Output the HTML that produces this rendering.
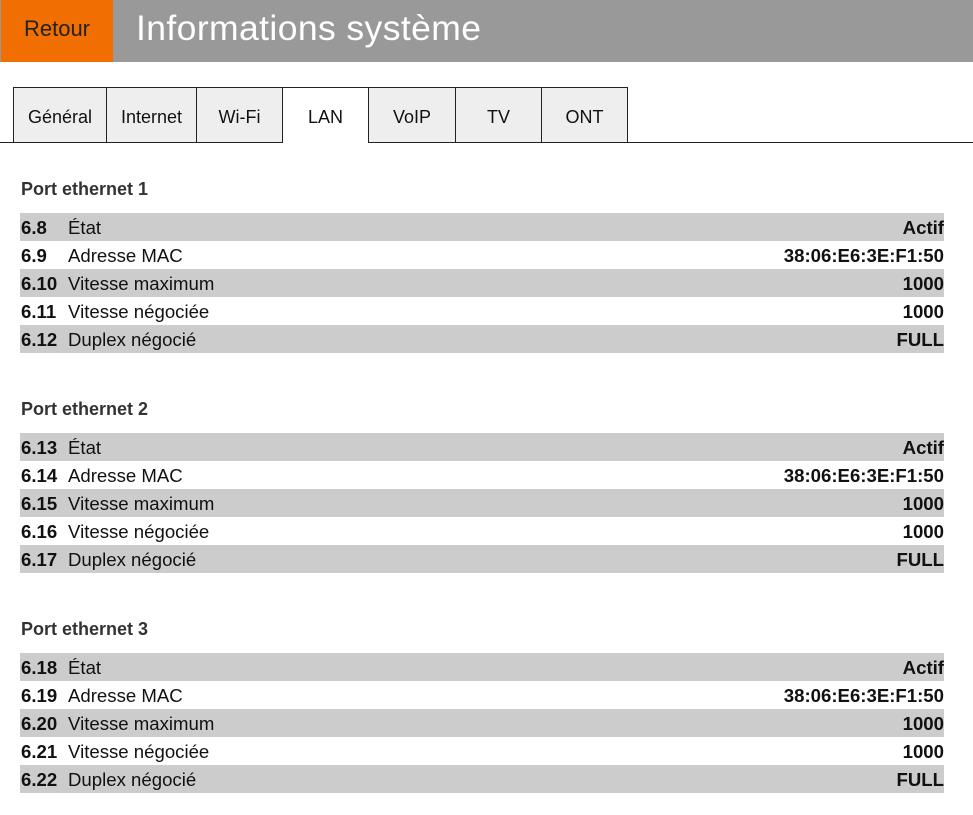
<!DOCTYPE html>
<html><head><meta charset="utf-8"><style>
body{margin:0;width:973px;height:815px;background:#fff;font-family:"Liberation Sans",Arial,sans-serif;overflow:hidden;position:relative}
.hdr{position:absolute;left:0;top:0;width:973px;height:62px;background:#999}
.ret{position:absolute;left:1px;top:0;width:112px;height:62px;background:#f16e00;color:#222;font-size:22px;line-height:58px;text-align:center}
.ttl{position:absolute;left:136px;top:0;line-height:56px;font-size:35.5px;color:#fff;letter-spacing:0.4px}
.line{position:absolute;left:0;top:142px;width:973px;height:1px;background:#222}
.tab{position:absolute;top:87px;height:55px;background:#eee;border-left:1px solid #222;border-top:1px solid #222;box-sizing:border-box;font-size:18px;color:#111;text-align:center;line-height:58px}
.tab.act{background:#fff;height:56px}
.tab.last{border-right:1px solid #222}
.sec{position:absolute;left:21px;font-size:18px;font-weight:bold;color:#333}
.row{position:absolute;left:20px;width:924px;height:28px;font-size:18.6px;line-height:29px;color:#111}
.row.g{background:#ccc}
.row b{position:absolute;left:1px}
.row span{position:absolute;left:48px}
.row i{position:absolute;right:0;font-style:normal;font-weight:bold}
</style></head><body>
<div class="hdr"></div><div class="ret">Retour</div><div class="ttl">Informations système</div>
<div class="line"></div>
<div class="tab" style="left:13px;width:93px">Général</div>
<div class="tab" style="left:106px;width:90px">Internet</div>
<div class="tab" style="left:196px;width:86px">Wi-Fi</div>
<div class="tab act" style="left:282px;width:86px">LAN</div>
<div class="tab" style="left:368px;width:87px">VoIP</div>
<div class="tab" style="left:455px;width:86px">TV</div>
<div class="tab last" style="left:541px;width:87px">ONT</div>

<div class="sec" style="top:179px">Port ethernet 1</div>
<div class="row g" style="top:213px"><b>6.8</b><span>État</span><i>Actif</i></div>
<div class="row" style="top:241px"><b>6.9</b><span>Adresse MAC</span><i>38:06:E6:3E:F1:50</i></div>
<div class="row g" style="top:269px"><b>6.10</b><span>Vitesse maximum</span><i>1000</i></div>
<div class="row" style="top:297px"><b>6.11</b><span>Vitesse négociée</span><i>1000</i></div>
<div class="row g" style="top:325px"><b>6.12</b><span>Duplex négocié</span><i>FULL</i></div>

<div class="sec" style="top:399px">Port ethernet 2</div>
<div class="row g" style="top:433px"><b>6.13</b><span>État</span><i>Actif</i></div>
<div class="row" style="top:461px"><b>6.14</b><span>Adresse MAC</span><i>38:06:E6:3E:F1:50</i></div>
<div class="row g" style="top:489px"><b>6.15</b><span>Vitesse maximum</span><i>1000</i></div>
<div class="row" style="top:517px"><b>6.16</b><span>Vitesse négociée</span><i>1000</i></div>
<div class="row g" style="top:545px"><b>6.17</b><span>Duplex négocié</span><i>FULL</i></div>

<div class="sec" style="top:619px">Port ethernet 3</div>
<div class="row g" style="top:653px"><b>6.18</b><span>État</span><i>Actif</i></div>
<div class="row" style="top:681px"><b>6.19</b><span>Adresse MAC</span><i>38:06:E6:3E:F1:50</i></div>
<div class="row g" style="top:709px"><b>6.20</b><span>Vitesse maximum</span><i>1000</i></div>
<div class="row" style="top:737px"><b>6.21</b><span>Vitesse négociée</span><i>1000</i></div>
<div class="row g" style="top:765px"><b>6.22</b><span>Duplex négocié</span><i>FULL</i></div>
</body></html>
